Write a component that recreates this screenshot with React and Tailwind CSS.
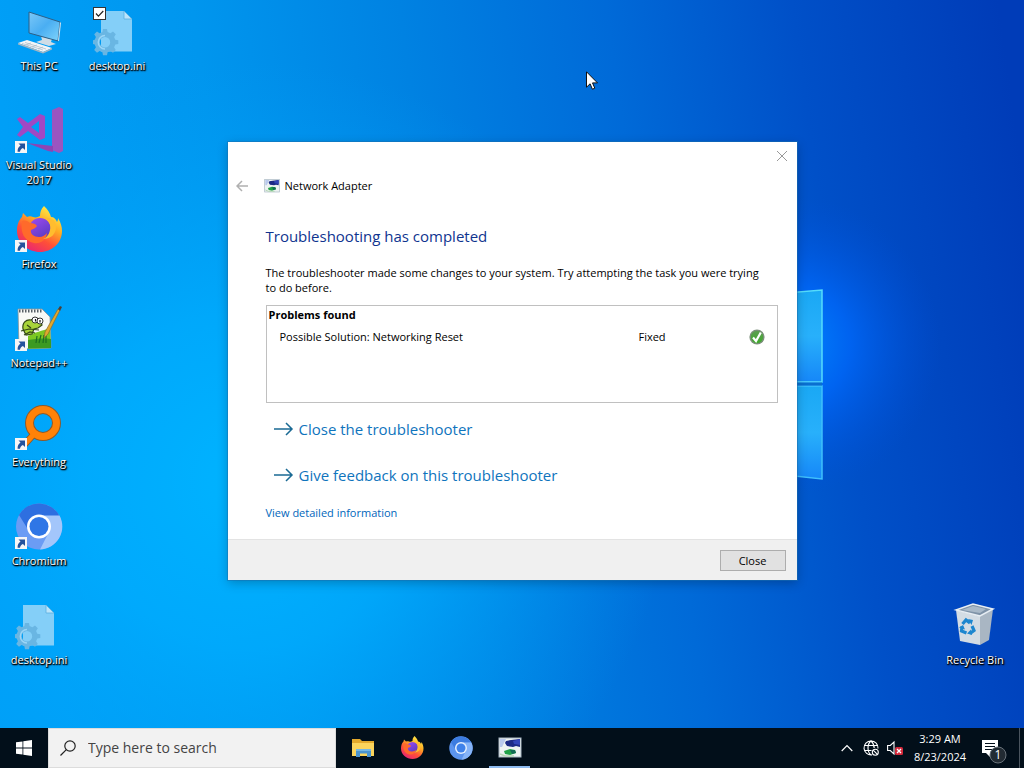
import React from "react";

const desktopItems = [
  { name: "This PC", icon: PcIcon },
  { name: "Visual Studio 2017", icon: VisualStudioIcon, shortcut: true },
  { name: "Firefox", icon: FirefoxIcon, shortcut: true },
  { name: "Notepad++", icon: NotepadIcon, shortcut: true },
  { name: "Everything", icon: EverythingIcon, shortcut: true },
  { name: "Chromium", icon: ChromiumIcon, shortcut: true },
  { name: "desktop.ini", icon: IniFileIcon },
];

const pinnedApps = [
  { name: "File Explorer", icon: FolderIcon },
  { name: "Firefox", icon: FirefoxIcon },
  { name: "Chromium", icon: ChromiumRoundIcon },
  { name: "Network Adapter", icon: TroubleshootIcon, active: true },
];

export default function App() {
  return (
    <div className="flex flex-col h-screen overflow-hidden select-none font-['Open_Sans','Noto_Sans',sans-serif] text-[11px] leading-4">
      <main className="relative flex-1 flex justify-between overflow-hidden bg-[#0078e4]">
        <Wallpaper />

        <div className="relative flex">
          <div className="flex flex-col">
            {desktopItems.map((item) => (
              <DesktopItem key={item.name} {...item} />
            ))}
          </div>
          <DesktopItem name="desktop.ini" icon={IniFileIcon} checked />
        </div>

        <div className="relative flex flex-col justify-end pb-[35px] pr-2.5">
          <DesktopItem name="Recycle Bin" icon={RecycleBinIcon} />
        </div>

        <div className="absolute inset-0 flex items-center justify-center pb-1.5 pointer-events-none">
          <TroubleshooterDialog />
        </div>

        <svg className="absolute left-[586px] top-[71px] w-3 h-[19px]" viewBox="0 0 12 19">
          <path
            d="M.5.8v15.4l3.6-3.4 2.3 5.4 2.4-1-2.3-5.3h5z"
            fill="#fff"
            stroke="#111"
            strokeWidth="1"
          />
        </svg>
      </main>

      <Taskbar />
    </div>
  );
}

function DesktopItem({ name, icon: Icon, shortcut, checked }) {
  return (
    <div className="relative w-[78px] h-[99px] pt-2 flex flex-col items-center">
      <div className="relative w-12 h-12">
        <Icon className="w-12 h-12" />
        {shortcut && <ShortcutArrow />}
      </div>
      {checked && (
        <label className="absolute left-[15px] top-[7px] w-[13px] h-[13px]">
          <input
            type="checkbox"
            defaultChecked
            aria-label={name}
            className="peer block appearance-none w-[13px] h-[13px] bg-white border border-[#333]"
          />
          <svg
            viewBox="0 0 13 13"
            className="absolute inset-0 hidden peer-checked:block pointer-events-none"
          >
            <path d="M3 6.5l2.4 2.6L10.3 4" fill="none" stroke="#222" strokeWidth="1.2" />
          </svg>
        </label>
      )}
      <span className="mt-0.5 w-full text-center leading-[15px] text-white [text-shadow:1px_1px_2px_#000,1px_1px_1px_#000,0_1px_1px_#000]">
        {name}
      </span>
    </div>
  );
}

function TroubleshooterDialog() {
  return (
    <section className="w-[569px] max-w-full bg-white text-black pointer-events-auto outline outline-1 outline-[#1a6fb0]/50 shadow-[0_3px_10px_rgba(0,0,0,0.25)]">
      <div className="flex justify-end h-7">
        <button aria-label="Close window" className="w-[30px] flex items-center justify-center">
          <svg viewBox="0 0 12 12" className="w-3 h-3">
            <path d="M1 1l10 10M11 1L1 11" stroke="#999" strokeWidth="1" />
          </svg>
        </button>
      </div>

      <div className="flex items-center h-8 px-2">
        <button aria-label="Back" className="w-7">
          <svg viewBox="0 0 12 12" className="w-3 h-3">
            <path d="M12 6H1M6 1L1 6l5 5" fill="none" stroke="#b0b0b0" strokeWidth="1.5" />
          </svg>
        </button>
        <TroubleshootIcon className="w-4 h-4" />
        <h1 className="ml-[5px]">Network Adapter</h1>
      </div>

      <div className="pl-[38px] pr-[19px] pt-[22px] pb-[18px]">
        <h2 className="text-[15px] leading-6 text-[#0f348f]">Troubleshooting has completed</h2>
        <p className="mt-[17px] pr-2 leading-[15px]">
          The troubleshooter made some changes to your system. Try attempting the task you were
          trying to do before.
        </p>

        <div className="mt-2.5 min-h-[98px] border border-[#c0c0c0]">
          <table className="w-full table-fixed text-left">
            <colgroup>
              <col />
              <col className="w-[111px]" />
              <col className="w-[27px]" />
            </colgroup>
            <thead>
              <tr>
                <th colSpan={3} className="h-5 px-0.5 pb-0.5 font-bold">
                  Problems found
                </th>
              </tr>
            </thead>
            <tbody>
              <tr>
                <td className="h-[22px] pl-[13px]">Possible Solution: Networking Reset</td>
                <td>Fixed</td>
                <td>
                  <FixedIcon className="w-4 h-4" />
                </td>
              </tr>
            </tbody>
          </table>
        </div>

        <nav className="flex flex-col items-start gap-[22px] mt-3.5 pl-2">
          <CommandLink>Close the troubleshooter</CommandLink>
          <CommandLink>Give feedback on this troubleshooter</CommandLink>
        </nav>
        <a href="#details" className="block w-fit mt-[18px] text-[#0066bb]">
          View detailed information
        </a>
      </div>

      <footer className="flex justify-end items-center h-[41px] pr-[11px] bg-[#f0f0f0] border-t border-[#e3e3e3]">
        <button className="w-[66px] h-[21px] leading-[19px] bg-[#e1e1e1] border border-[#adadad]">
          Close
        </button>
      </footer>
    </section>
  );
}

function CommandLink({ children }) {
  return (
    <a href="#next" className="flex items-center text-[15px] leading-6 text-[#0f74bd]">
      <svg viewBox="0 0 20 14" className="w-5 h-3.5 mr-[5px]">
        <path d="M0 7h18M12 1l6 6-6 6" fill="none" stroke="#1a6a94" strokeWidth="1.5" />
      </svg>
      {children}
    </a>
  );
}

function Taskbar() {
  return (
    <footer className="flex h-10 shrink-0 bg-[#020f1a] text-white">
      <button aria-label="Start" className="w-12 flex items-center justify-center">
        <svg viewBox="0 0 16 16" className="w-4 h-4" fill="#fff">
          <path d="M0 2.3l6.5-.9v6.2H0zM7.3 1.3L16 0v7.6H7.3zM0 8.4h6.5v6.2L0 13.7zM7.3 8.4H16V16l-8.7-1.3z" />
        </svg>
      </button>
      <label className="flex items-center w-72 px-[11px] bg-[#f2f2f2] border border-[#dcdcdc]">
        <svg viewBox="0 0 16 16" className="w-4 h-4 mr-3 shrink-0">
          <circle cx="10" cy="6" r="5.2" fill="none" stroke="#222" strokeWidth="1.2" />
          <path d="M6.3 9.7L.5 15.5" stroke="#222" strokeWidth="1.2" />
        </svg>
        <input
          type="text"
          aria-label="Search"
          placeholder="Type here to search"
          className="min-w-0 flex-1 bg-transparent outline-none text-sm text-black placeholder:text-[#444]"
        />
      </label>

      <div className="flex flex-1 pl-0.5">
        {pinnedApps.map(({ name, icon: Icon, active }) => (
          <button
            key={name}
            aria-label={name}
            className="relative w-[49px] flex items-center justify-center"
          >
            <Icon className="w-6 h-6" />
            {active && <span className="absolute bottom-0 inset-x-1 h-0.5 bg-[#8ebbf0]" />}
          </button>
        ))}
      </div>

      <div className="flex items-center">
        <button aria-label="Show hidden icons" className="w-6 flex justify-center">
          <svg viewBox="0 0 12 8" className="w-3 h-2">
            <path d="M.7 7L6 1.5 11.3 7" fill="none" stroke="#fff" strokeWidth="1.2" />
          </svg>
        </button>
        <button aria-label="Network" className="w-6 flex justify-center">
          <svg viewBox="0 0 16 16" className="w-4 h-4" fill="none" stroke="#fff" strokeWidth="1.1">
            <path d="M9 14.9A7 7 0 1 1 15 8.5M8 1C4 4 4 12 8 15M8 1c2.2 1.7 3 4 3.2 7M1.6 5.5h12.8M1.6 10.5H8.5" />
            <circle cx="12.3" cy="12.3" r="3" fill="#020f1a" />
            <path d="M10.2 10.2l4.2 4.2" />
          </svg>
        </button>
        <button aria-label="Volume" className="w-6 flex justify-center">
          <svg viewBox="0 0 16 16" className="w-4 h-4">
            <path d="M.6 5.5h2.7L7 2v12L3.3 10.5H.6z" fill="none" stroke="#fff" strokeWidth="1.1" />
            <rect x="8" y="7" width="8" height="8" rx="1.5" fill="#d3283a" />
            <path d="M10 9l4 4M14 9l-4 4" stroke="#fff" strokeWidth="1.3" />
          </svg>
        </button>
        <div className="w-[66px] text-center leading-[18px]">
          <div>3:29 AM</div>
          <div>8/23/2024</div>
        </div>
        <button aria-label="Notifications" className="relative w-[46px] h-full">
          <svg viewBox="0 0 28 28" className="absolute left-2 top-2 w-7 h-7">
            <path d="M1 4h16v13H9v4l-4-4H1z" fill="#fff" />
            <path d="M4 7.5h10M4 10.5h10M4 13.5h7" stroke="#020f1a" strokeWidth="1" />
            <circle cx="17" cy="19" r="8" fill="#222b33" stroke="#69727a" strokeWidth="1" />
          </svg>
          <span className="absolute left-[17px] top-[18px] w-4 text-center text-xs leading-[18px]">
            1
          </span>
        </button>
        <div className="w-[5px] h-full border-l border-[#4a545e]" />
      </div>
    </footer>
  );
}

function Wallpaper() {
  return (
    <svg
      viewBox="0 0 1024 728"
      preserveAspectRatio="xMidYMid slice"
      className="absolute inset-0 w-full h-full"
    >
      <defs>
        <linearGradient id="sky" x1="0" y1=".35" x2="1" y2=".25">
          <stop offset="0" stopColor="#00a0f8" />
          <stop offset=".22" stopColor="#0096ee" />
          <stop offset=".42" stopColor="#0082e2" />
          <stop offset=".62" stopColor="#006ad8" />
          <stop offset=".8" stopColor="#0050c8" />
          <stop offset="1" stopColor="#003cb8" />
        </linearGradient>
        <radialGradient id="cyan" gradientUnits="userSpaceOnUse" cx="250" cy="480" r="420">
          <stop offset="0" stopColor="#00b4ff" />
          <stop offset=".4" stopColor="#00aeff" stopOpacity=".75" />
          <stop offset="1" stopColor="#009cf4" stopOpacity="0" />
        </radialGradient>
        <radialGradient id="glow" gradientUnits="userSpaceOnUse" cx="790" cy="345" r="150">
          <stop offset="0" stopColor="#0088ff" />
          <stop offset=".4" stopColor="#0068fa" stopOpacity=".8" />
          <stop offset="1" stopColor="#0050d8" stopOpacity="0" />
        </radialGradient>
        <linearGradient id="pane" x1="0" y1="0" x2="0" y2="1">
          <stop offset="0" stopColor="#1aa8f4" />
          <stop offset=".5" stopColor="#28b0fb" />
          <stop offset="1" stopColor="#1687f8" />
        </linearGradient>
      </defs>
      <rect width="1024" height="728" fill="url(#sky)" />
      <rect width="1024" height="728" fill="url(#cyan)" />
      <rect width="1024" height="728" fill="url(#glow)" />
      <path d="M700 300l122-10v92H700z" fill="url(#pane)" stroke="#55dcfb" strokeWidth="1.5" />
      <path d="M700 386h122v93l-122-13z" fill="url(#pane)" stroke="#3fc0fc" strokeWidth="1.5" />
      <path d="M700 384h122" stroke="#0a6fd0" strokeWidth="3" />
    </svg>
  );
}

function ShortcutArrow() {
  return (
    <svg viewBox="0 0 12 12" className="absolute left-0 bottom-0.5 w-3 h-3">
      <rect width="12" height="12" fill="#f6f6f6" />
      <path d="M3.5 2.5H10V9L7.9 6.9C5.8 8 5.2 9 5 10.7H2.6C2.4 8 3.5 5.8 5.5 4.5z" fill="#24529c" />
    </svg>
  );
}

function PcIcon({ className }) {
  return (
    <svg viewBox="0 0 48 48" className={className}>
      <defs>
        <linearGradient id="screen" x1="0" y1="0" x2="1" y2="1">
          <stop offset="0" stopColor="#7cc8f8" />
          <stop offset=".5" stopColor="#4aaef2" />
          <stop offset="1" stopColor="#7fd4fb" />
        </linearGradient>
      </defs>
      <path d="M26 28l11 3-1 3 5 2-7 2-13-4 6-2z" fill="#cfdde6" />
      <path d="M14 4l31 10-2 19-29-8z" fill="url(#screen)" stroke="#2d5f86" strokeWidth="1" />
      <path d="M45 14l1 1-2 18-1 0z" fill="#cfe6f5" />
      <path d="M3 35l9-3 25 8-9 4z" fill="#f2f5f7" />
      <path d="M3 35v1.5L28 45.5l9-4V40l-9 4z" fill="#a5b5c1" />
      <path d="M7 35.5l21 6.5M10 34.5l21 6.5M11 37l5-2M17 39l5-2M23 41l5-2" stroke="#9eb0be" strokeWidth=".6" />
    </svg>
  );
}

function IniFileIcon({ className }) {
  return (
    <svg viewBox="0 0 48 48" className={className}>
      <path d="M8 3h23l8 8v32.5H8z" fill="#84cff8" />
      <path d="M31 3v8h8z" fill="#bce5fb" stroke="#5aafdf" strokeWidth=".8" />
      <path
        fill="#69b6e3"
        fillRule="evenodd"
        d="M10 21h4l.6 3 2.8 1.2 2.6-1.7 2.8 2.8-1.7 2.6 1.2 2.8 3 .6v3.6l-3 .6-1.2 2.8 1.7 2.6-2.8 2.8-2.6-1.7-2.8 1.2-.6 3h-4l-.6-3-2.8-1.2L4 44.7 1.2 41.9l1.7-2.6L1.700 36.5 0 35.9v-3.6l1.700-.6 1.200-2.8-1.700-2.6L4 23.5l2.6 1.7L9.4 24zM12 29a5.2 5.2 0 1 0 0 10.4A5.2 5.2 0 0 0 12 29z"
      />
      <path d="M12 27.5a6.7 6.7 0 0 0 0 13.4" fill="none" stroke="#9bd6f7" strokeWidth="1.5" />
    </svg>
  );
}

function VisualStudioIcon({ className }) {
  return (
    <svg viewBox="0 0 48 48" className={className}>
      <path d="M37 3l7-3 4 2v42l-4 2-7-3z" fill="#9a55c0" />
      <path
        fillRule="evenodd"
        d="M2 12l3-2 8 6 12-9 5 2v22l-5 2-12-9-8 6-3-2 6-8zM24 14l-8 6 8 6z"
        fill="#a048c4"
      />
      <path d="M12 36l26 3v6l-5-1z" fill="#8c45b4" />
    </svg>
  );
}

function FirefoxIcon({ className }) {
  return (
    <svg viewBox="0 0 48 48" className={className}>
      <defs>
        <linearGradient id="fox" x1=".8" y1=".05" x2=".25" y2="1">
          <stop offset="0" stopColor="#fff04a" />
          <stop offset=".35" stopColor="#ffab24" />
          <stop offset=".65" stopColor="#ff5037" />
          <stop offset="1" stopColor="#e72277" />
        </linearGradient>
        <linearGradient id="foxGlobe" x1="0" y1="0" x2=".6" y2="1">
          <stop offset="0" stopColor="#a04bf0" />
          <stop offset="1" stopColor="#5a3bc4" />
        </linearGradient>
      </defs>
      <path
        d="M29 0c4 4 6 7 7 11 3 0 5 2 6 5 1-2 1-3 1-4 3 5 4 9 4 13 0 12-10 21-22 21S2 37 2 25c0-5 1-10 5-14l1-4 4 4c2-1 4-1 6 0 3 1 5 0 7-1 0-4 1-7 4-10z"
        fill="url(#fox)"
      />
      <circle cx="25" cy="23" r="11" fill="url(#foxGlobe)" />
      <path
        d="M7 15c3-1 6 0 8 2 3 0 6 1 7 3-1 2-4 3-6 4-1 4 3 7 8 7 4 0 6-2 8-4-1 8-7 11-13 10C9 35 5 26 7 15z"
        fill="#ff6a2b"
      />
      <path d="M29 12c5 2 7 7 6 12-1 5-4 8-7 9 8 0 13-5 13-12S36 11 29 12z" fill="#ffbd2e" />
    </svg>
  );
}

function NotepadIcon({ className }) {
  return (
    <svg viewBox="0 0 48 48" className={className}>
      <path d="M3 4h24l8 8 1 31-32 1z" fill="#f8faf6" stroke="#8a949a" strokeWidth=".8" />
      <path d="M13 31c7-4 14-5 22-8l1 20-23 .5z" fill="#7bc822" />
      <path d="M13 35c7-1 15-2 23-1v9l-23 .5z" fill="#3c9a22" />
      <path d="M4 6h24" stroke="#596167" strokeWidth="3" strokeDasharray="1.5 1.5" />
      <path
        d="M8 24c-1-6 3-10 8-9l4-2 5 1 2 6-4 3-4 1-2 5-6 1z"
        fill="#a8d43a"
        stroke="#334817"
        strokeWidth="1.2"
      />
      <path d="M6 26l8-2 10 1M12 20l4 3M9 30l6-3 5 1" fill="none" stroke="#334817" strokeWidth="1.2" />
      <circle cx="20" cy="15" r="3" fill="#fff" stroke="#222" strokeWidth=".9" />
      <circle cx="25" cy="16" r="3" fill="#fff" stroke="#222" strokeWidth=".9" />
      <path d="M20.5 14v2.5M25 15v2.5" stroke="#111" strokeWidth="1.2" />
      <path d="M21 38l1-7M24 38l2-8M28 38l1-8M31 38v-7" stroke="#1c6e20" strokeWidth="1.2" />
      <path d="M29 33l1-6L43 4l2 1-12 24z" fill="#e0a82e" stroke="#8c6a28" strokeWidth=".7" />
      <path d="M43 4l2-3 2 1-2 4z" fill="#4c4038" />
    </svg>
  );
}

function EverythingIcon({ className }) {
  return (
    <svg viewBox="0 0 48 48" className={className} fill="none" strokeLinecap="round">
      <path d="M19 30L10 40" stroke="#8f5a2a" strokeWidth="7" />
      <circle cx="28" cy="19" r="13.5" stroke="#8f5a2a" strokeWidth="9" />
      <circle cx="28" cy="19" r="13.5" stroke="#ff8208" strokeWidth="7" />
      <path d="M19 30L10 40" stroke="#ff8208" strokeWidth="5" />
    </svg>
  );
}

function ChromiumIcon({ className }) {
  return (
    <svg viewBox="0 0 48 48" className={className}>
      <circle cx="24" cy="23.5" r="23" fill="#6b9cf4" />
      <path d="M4 12A23 23 0 0 1 44.5 13H24A11 11 0 0 0 14 28z" fill="#2e6fe0" />
      <path d="M24 12.5h20.5A23 23 0 0 1 25 46.5L34 29A11 11 0 0 0 24 12.5z" fill="#a3c6fb" />
      <circle cx="24" cy="23.5" r="12" fill="#fff" />
      <circle cx="24" cy="23.5" r="9.5" fill="#2f76e6" />
    </svg>
  );
}

function ChromiumRoundIcon({ className }) {
  return (
    <svg viewBox="0 0 48 48" className={className}>
      <circle cx="24" cy="24" r="23.5" fill="#5b94ee" />
      <path d="M4 12A23.5 23.5 0 0 1 44.5 13H24A11 11 0 0 0 14 29z" fill="#3c7ce0" />
      <path d="M24 13h20.5A23.5 23.5 0 0 1 25 47.5L34 29A11 11 0 0 0 24 13z" fill="#86b4f8" />
      <circle cx="24" cy="24" r="12" fill="#e4effe" />
      <circle cx="24" cy="24" r="9" fill="#3f82ea" />
    </svg>
  );
}

function RecycleBinIcon({ className }) {
  return (
    <svg viewBox="0 0 48 48" className={className}>
      <path d="M5 8l4 31 20 4V14z" fill="#d3dce4" />
      <path d="M42 7l-4 31-9 5V14z" fill="#a9b6c3" />
      <path d="M5 8l17-6 20 5-13 7z" fill="#7f93a8" stroke="#e8eef3" strokeWidth="1.5" />
      <path d="M11 8l11-4 13 3-6 4z" fill="#a9b9c8" />
      <g fill="none" stroke="#1c86cf" strokeWidth="3.2">
        <path d="M11.5 22l3.5-4 4 3" />
        <path d="M21 24l2 4.5-4 3" />
        <path d="M15.5 31l-5-2 .5-4.5" />
      </g>
      <path d="M17 17l5 1-1.5 5zM21 33l-5-1.5 4-4zM8 25.5l4-2.5 2 4.5z" fill="#1c86cf" />
    </svg>
  );
}

function FolderIcon({ className }) {
  return (
    <svg viewBox="0 0 24 24" className={className}>
      <path d="M1 3h8l2 2h12v15H1z" fill="#e3a92c" />
      <path d="M1 7h22v13H1z" fill="#fbd45c" />
      <path d="M5 13h15v8h-4v-3.5H9V21H5z" fill="#4a94cf" />
      <path d="M5 13h15v2H5z" fill="#75b7e4" />
    </svg>
  );
}

function TroubleshootIcon({ className }) {
  return (
    <svg viewBox="0 0 24 24" className={className}>
      <rect x="1" y="2" width="22" height="19" fill="#eef3f2" stroke="#a9b8c4" strokeWidth="1" />
      <path d="M2 3h6l-4 8H2z" fill="#b9c9ec" />
      <path d="M8 5l5-1 9-1v8l-4-1-3 1-6-1-2-3z" fill="#1c2a86" />
      <path d="M15 5l7-2v6l-6-1z" fill="#3145b8" />
      <path d="M6 15l6-2 5 1 1 3-6 2-5-1z" fill="#22a348" />
      <path d="M12 14h5l1 3-4 1z" fill="#136b54" />
      <path d="M2 18l5 2h9" fill="none" stroke="#b8d8b8" strokeWidth="1.5" />
    </svg>
  );
}

function FixedIcon({ className }) {
  return (
    <svg viewBox="0 0 16 16" className={className}>
      <defs>
        <linearGradient id="fixed" x1="0" y1="0" x2="0" y2="1">
          <stop offset="0" stopColor="#5d9d52" />
          <stop offset="1" stopColor="#3faa2c" />
        </linearGradient>
      </defs>
      <circle cx="8" cy="8" r="7.6" fill="#7d8f7c" />
      <circle cx="8" cy="8" r="6.2" fill="url(#fixed)" />
      <path d="M4 8.5l3 3.5 4.8-8.5" fill="none" stroke="#fff" strokeWidth="2.2" />
    </svg>
  );
}
